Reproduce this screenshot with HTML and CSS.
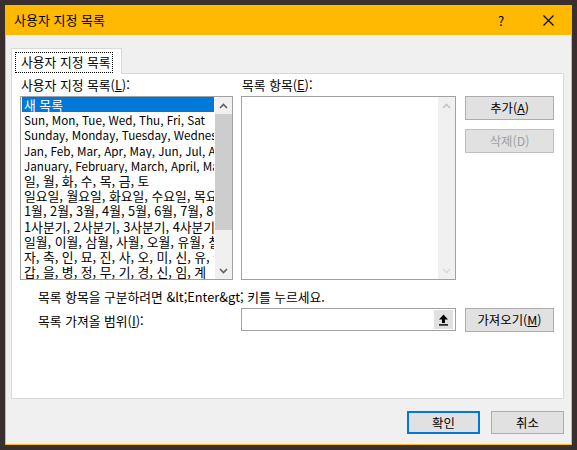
FILE: index.html
```html
<!DOCTYPE html>
<html lang="ko">
<head>
<meta charset="utf-8">
<title>사용자 지정 목록</title>
<link rel="stylesheet" href="styles.css">
</head>
<body>
<div class="window">
  <div class="titlebar">
    <span class="title">사용자 지정 목록</span>
    <span class="tb-btn help">?</span>
    <span class="tb-btn close">
      <svg width="11" height="11" viewBox="0 0 11 11"><path d="M0.5 0.5 L10.5 10.5 M10.5 0.5 L0.5 10.5" stroke="#000" stroke-width="1.1" fill="none"/></svg>
    </span>
  </div>
  <div class="content">
    <div class="tabs">
      <div class="tab"><span class="tab-label">사용자 지정 목록</span></div>
    </div>
    <div class="panel">
      <div class="lists">
        <div class="col col-left">
          <div class="label">사용자 지정 목록(<u>L</u>):</div>
          <div class="listbox">
            <div class="items">
              <div class="item ko selected">새 목록</div>
              <div class="item">Sun, Mon, Tue, Wed, Thu, Fri, Sat</div>
              <div class="item">Sunday, Monday, Tuesday, Wednesday, Thursday, Friday, Saturday</div>
              <div class="item">Jan, Feb, Mar, Apr, May, Jun, Jul, Aug, Sep, Oct, Nov, Dec</div>
              <div class="item">January, February, March, April, May, June, July</div>
              <div class="item ko">일, 월, 화, 수, 목, 금, 토</div>
              <div class="item ko">일요일, 월요일, 화요일, 수요일, 목요일, 금요일, 토요일</div>
              <div class="item ko">1월, 2월, 3월, 4월, 5월, 6월, 7월, 8월, 9월</div>
              <div class="item ko">1사분기, 2사분기, 3사분기, 4사분기</div>
              <div class="item ko">일월, 이월, 삼월, 사월, 오월, 유월, 칠월</div>
              <div class="item ko">자, 축, 인, 묘, 진, 사, 오, 미, 신, 유, 술, 해</div>
              <div class="item ko">갑, 을, 병, 정, 무, 기, 경, 신, 임, 계</div>
            </div>
            <div class="scrollbar">
              <div class="arrow"><svg width="9" height="6" viewBox="0 0 9 6"><path d="M1 5 L4.5 1.5 L8 5" stroke="#606060" stroke-width="1.6" fill="none"/></svg></div>
              <div class="track"><div class="thumb"></div></div>
              <div class="arrow"><svg width="9" height="6" viewBox="0 0 9 6"><path d="M1 1 L4.5 4.5 L8 1" stroke="#606060" stroke-width="1.6" fill="none"/></svg></div>
            </div>
          </div>
        </div>
        <div class="col col-mid">
          <div class="label">목록 항목(<u>E</u>):</div>
          <div class="listbox">
            <div class="items"></div>
            <div class="scrollbar disabled">
              <div class="arrow"><svg width="9" height="6" viewBox="0 0 9 6"><path d="M1 5 L4.5 1.5 L8 5" stroke="#c4c4c4" stroke-width="1.6" fill="none"/></svg></div>
              <div class="track"></div>
              <div class="arrow"><svg width="9" height="6" viewBox="0 0 9 6"><path d="M1 1 L4.5 4.5 L8 1" stroke="#dadada" stroke-width="1.6" fill="none"/></svg></div>
            </div>
          </div>
        </div>
        <div class="col col-btns">
          <button class="btn side">추가(<u>A</u>)</button>
          <button class="btn side" disabled>삭제(D)</button>
        </div>
      </div>
      <div class="hint">목록 항목을 구분하려면 &amp;lt;Enter&amp;gt; 키를 누르세요.</div>
      <div class="import-row">
        <span class="import-label">목록 가져올 범위(<u>I</u>):</span>
        <div class="range-input">
          <span class="collapse-btn">
            <svg width="11" height="12" viewBox="0 0 11 12"><path d="M5.5 0.5 L10 5.5 L7 5.5 L7 9 L4 9 L4 5.5 L1 5.5 Z" fill="#000"/><rect x="1" y="10.2" width="9" height="1.4" fill="#000"/></svg>
          </span>
        </div>
        <button class="btn side">가져오기(<u>M</u>)</button>
      </div>
    </div>
    <div class="footer">
      <button class="btn foot default">확인</button>
      <button class="btn foot">취소</button>
    </div>
  </div>
</div>
</body>
</html>
```

FILE: styles.css
```css
* { box-sizing: border-box; }

html, body {
  margin: 0;
  padding: 0;
  background: #3a2f2f;
  font-family: "Noto Sans CJK KR", "Noto Sans", sans-serif;
  font-size: 12px;
  color: #000;
}

body { padding: 5px; }

.window {
  width: 567px;
  height: 440px;
  background: #f0f0f0;
  border: 1px solid #ffb900;
  border-top: 0;
  display: flex;
  flex-direction: column;
}

.titlebar {
  height: 30px;
  background: #ffb900;
  display: flex;
  align-items: center;
  padding-left: 8px;
  flex-shrink: 0;
}

.title {
  flex: 1;
  font-size: 13px;
  line-height: 16px;
}

.tb-btn {
  width: 46px;
  height: 30px;
  display: flex;
  align-items: center;
  justify-content: center;
}

.help { font-size: 13px; padding-right: 2px; }

.content {
  flex: 1;
  padding: 13px 7px 0 5px;
  display: flex;
  flex-direction: column;
}

.tabs {
  display: flex;
  position: relative;
  z-index: 1;
  margin-bottom: -1px;
}

.tab {
  width: 111px;
  height: 26px;
  background: #fff;
  border: 1px solid #d9d9d9;
  border-bottom: 0;
  padding: 3px 0 0 3px;
}

.tab-label {
  display: block;
  width: 98px;
  height: 21px;
  border: 1px dotted #000;
  padding-left: 5px;
  line-height: 18px;
  font-size: 12.8px;
  white-space: nowrap;
}

.panel {
  height: 326px;
  background: #fff;
  border: 1px solid #d9d9d9;
  display: flex;
  flex-direction: column;
}

.lists {
  display: flex;
  padding-left: 8px;
}

.col { display: flex; flex-direction: column; }

.col-left { width: 213px; }
.col-mid { width: 215px; margin-left: 8px; }
.col-btns { width: 89px; margin-left: 9px; padding-top: 22px; gap: 9px; }

.label {
  height: 22px;
  padding: 3px 0 0 1px;
  line-height: 16px;
  font-size: 12.8px;
}

u { text-decoration: underline; text-underline-offset: 1px; }

.listbox {
  height: 184px;
  border: 1px solid #a0a0a0;
  display: flex;
  background: #fff;
  overflow: hidden;
}

.items {
  flex: 1;
  min-width: 0;
  padding: 0 1px;
  overflow: hidden;
}

.item {
  height: 15.2px;
  line-height: 15.2px;
  padding-left: 2px;
  white-space: nowrap;
  overflow: hidden;
  font-size: 11.7px;
}

.item.ko { font-size: 12.8px; }

.item.selected {
  background: #0078d7;
  color: #fff;
}

.scrollbar {
  width: 17px;
  flex-shrink: 0;
  background: #f0f0f0;
  display: flex;
  flex-direction: column;
}

.arrow {
  height: 17px;
  display: flex;
  align-items: center;
  justify-content: center;
}

.track { flex: 1; }

.thumb {
  height: 116px;
  background: #cdcdcd;
}

.btn {
  font-family: inherit;
  font-size: 12.4px;
  color: #000;
  background: #e1e1e1;
  border: 1px solid #adadad;
  padding: 0;
  margin: 0;
  line-height: 16px;
}

.btn.side { width: 89px; height: 24px; }

.btn:disabled {
  color: #a0a0a0;
  background: #e1e1e1;
  border-color: #bfbfbf;
}

.hint {
  margin-top: 9px;
  padding-left: 26px;
  line-height: 15px;
  font-size: 12.8px;
}

.import-row {
  display: flex;
  align-items: center;
  margin-top: 4px;
}

.import-label {
  width: 229px;
  padding-left: 26px;
  line-height: 15px;
  font-size: 12.8px;
}

.range-input {
  width: 215px;
  height: 23px;
  border: 1px solid #a0a0a0;
  background: #fff;
  display: flex;
  justify-content: flex-end;
  align-items: center;
  padding-right: 2px;
  margin-top: -1px;
}

.collapse-btn {
  width: 19px;
  height: 19px;
  background: #e1e1e1;
  display: flex;
  align-items: center;
  justify-content: center;
}

.import-row .btn { margin-left: 9px; }

.footer {
  display: flex;
  justify-content: flex-end;
  gap: 11px;
  margin-top: 12px;
}

.btn.foot { width: 73px; height: 23px; }

.btn.default { border: 2px solid #0078d7; }
```
